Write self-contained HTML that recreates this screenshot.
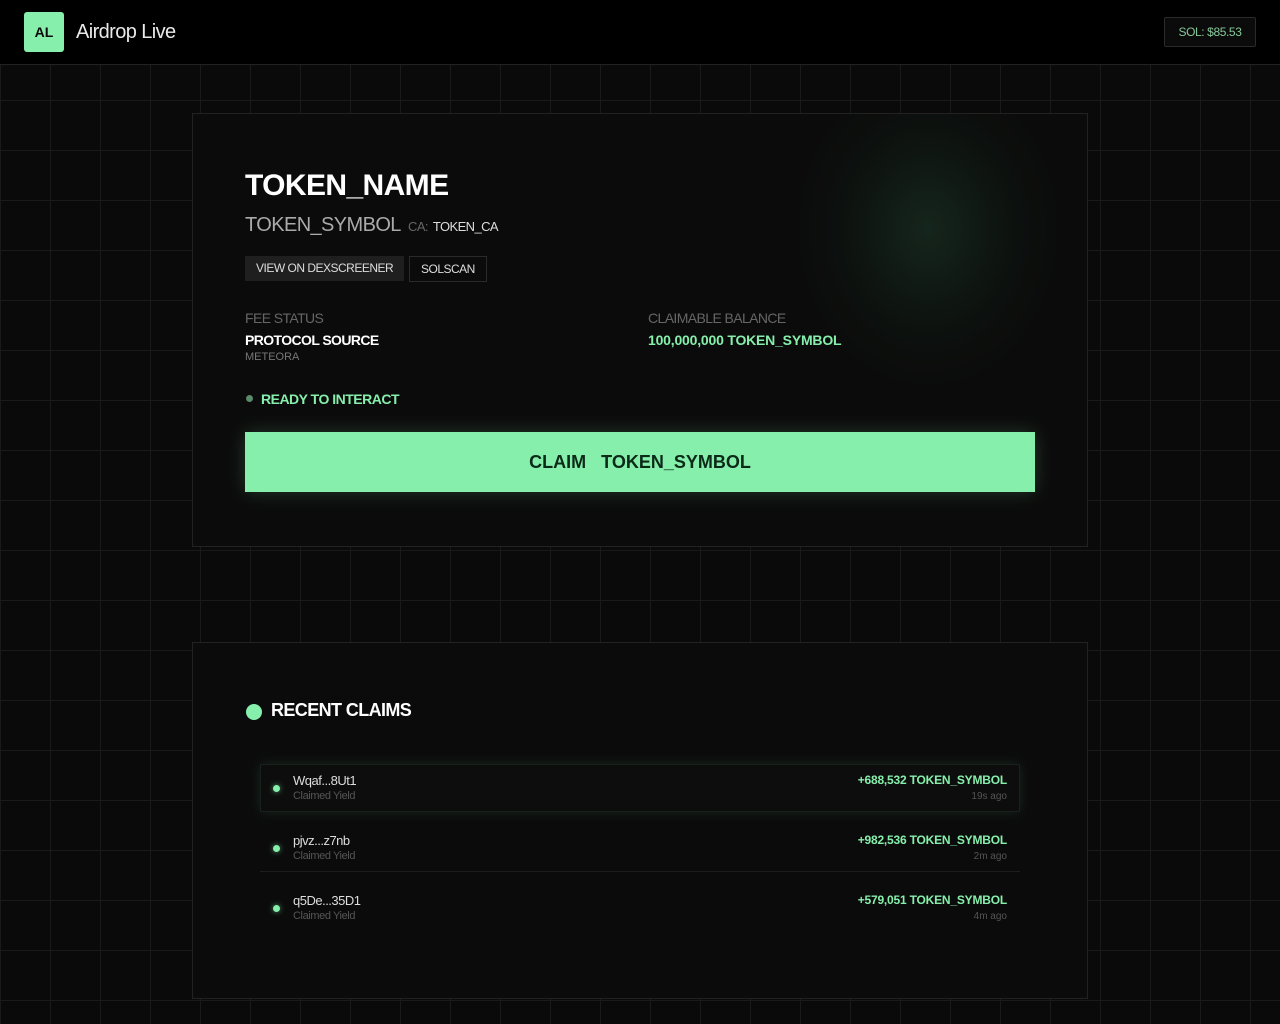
<!DOCTYPE html>
<html><head><style>
*{margin:0;padding:0;box-sizing:border-box}
body{width:1280px;height:1024px;overflow:hidden;background:#0a0a0a;font-family:"Liberation Sans",sans-serif;color:#eee;position:relative;
background-image:linear-gradient(#1a1a1a 1px,transparent 1px),linear-gradient(90deg,#1a1a1a 1px,transparent 1px);background-size:50px 50px;background-position:0 0}
.hdr{position:absolute;left:0;top:0;width:1280px;height:65px;background:#000;border-bottom:1px solid #222}
.logo{position:absolute;left:24px;top:12px;width:40px;height:40px;background:#86efac;border-radius:3px;color:#0a0a0a;font-weight:bold;font-size:14px;line-height:40px;text-align:center}
.brand{position:absolute;left:76px;top:21px;font-size:20px;letter-spacing:-0.6px;color:#eaeaea}
.sol{position:absolute;left:1164px;top:17px;width:92px;height:30px;border:1px solid #2a2a2a;background:#0b0b0b;border-radius:2px;color:#86c79a;font-size:12px;line-height:29px;text-align:center;letter-spacing:-0.4px}
.card{position:absolute;left:192px;width:896px;background:#0b0b0b;border:1px solid #222;overflow:hidden}
.glow{position:absolute;left:570px;top:0px;width:330px;height:330px;background:radial-gradient(ellipse 50% 60% at 50% 35%,rgba(40,85,60,.35),rgba(20,45,30,.15) 55%,transparent 80%)}
.t{position:absolute;white-space:nowrap}
.btn{position:absolute;height:25px;font-size:12px;line-height:25px;padding:0 11px;letter-spacing:-0.5px;color:#ddd}
.claim{position:absolute;left:52px;top:318px;width:790px;height:60px;background:#86efac;color:#0b2a17;font-size:18px;font-weight:bold;text-align:center;line-height:60px;box-shadow:0 0 18px rgba(134,239,172,.2)}
.row{position:absolute;left:67px;width:760px;height:48px}
.dot{position:absolute;left:13px;top:21px;width:7px;height:7px;border-radius:50%;background:#86efac;box-shadow:0 0 6px rgba(134,239,172,.6)}
.addr{position:absolute;left:33px;top:9px;font-size:13px;color:#ddd;letter-spacing:-0.5px}
.sub{position:absolute;left:33px;top:26px;font-size:11px;color:#555;letter-spacing:-0.4px}
.amt{position:absolute;right:13px;top:9px;font-size:12px;font-weight:bold;color:#86efac;letter-spacing:-0.2px}
.ago{position:absolute;right:13px;top:27px;font-size:10px;color:#555}
</style></head><body>
<div class="hdr"><div class="logo">AL</div><div class="brand">Airdrop Live</div><div class="sol">SOL: $85.53</div></div>

<div class="card" style="top:113px;height:434px">
<div class="glow"></div>
<div class="t" style="left:52px;top:55px;font-size:30px;font-weight:bold;color:#fff;letter-spacing:-0.6px">TOKEN_NAME</div>
<div class="t" style="left:52px;top:100px;font-size:20px;color:#aaa;letter-spacing:-0.6px">TOKEN_SYMBOL <span style="font-size:13px;color:#666;margin-left:3px">CA:</span> <span style="font-size:13px;color:#ddd">TOKEN_CA</span></div>
<div class="btn" style="left:52px;top:142px;background:#1f1f1f">VIEW ON DEXSCREENER</div>
<div class="btn" style="left:216px;top:142px;border:1px solid #2a2a2a;height:26px">SOLSCAN</div>
<div class="t" style="left:52px;top:196px;font-size:14px;color:#666;letter-spacing:-0.6px">FEE STATUS</div>
<div class="t" style="left:52px;top:218px;font-size:14px;font-weight:bold;color:#fff;letter-spacing:-0.6px">PROTOCOL SOURCE</div>
<div class="t" style="left:52px;top:237px;font-size:11px;color:#777">METEORA</div>
<div class="t" style="left:455px;top:196px;font-size:14px;color:#666;letter-spacing:-0.6px">CLAIMABLE BALANCE</div>
<div class="t" style="left:455px;top:218px;font-size:14px;font-weight:bold;color:#86efac;letter-spacing:-0.2px">100,000,000 TOKEN_SYMBOL</div>
<div style="position:absolute;left:53px;top:281px;width:7px;height:7px;border-radius:50%;background:#5a8a6a"></div>
<div class="t" style="left:68px;top:277px;font-size:14px;font-weight:bold;color:#86efac;letter-spacing:-0.5px">READY TO INTERACT</div>
<div class="claim">CLAIM &nbsp; TOKEN_SYMBOL</div>
</div>

<div class="card" style="top:642px;height:357px">
<div style="position:absolute;left:53px;top:61px;width:16px;height:16px;border-radius:50%;background:#86efac"></div>
<div class="t" style="left:78px;top:57px;font-size:18px;font-weight:bold;color:#fff;letter-spacing:-0.6px">RECENT CLAIMS</div>
<div class="row" style="top:121px;background:#0d0d0d;border:1px solid #18201b;box-shadow:0 0 12px rgba(134,239,172,.12)"><div class="dot" style="left:12px;top:20px"></div><div class="addr" style="left:32px;top:8px">Wqaf...8Ut1</div><div class="sub" style="left:32px;top:25px">Claimed Yield</div><div class="amt" style="right:12px;top:8px">+688,532 TOKEN_SYMBOL</div><div class="ago" style="right:12px;top:26px">19s ago</div></div>
<div class="row" style="top:181px;border-bottom:1px solid #1c1c1c"><div class="dot"></div><div class="addr">pjvz...z7nb</div><div class="sub">Claimed Yield</div><div class="amt">+982,536 TOKEN_SYMBOL</div><div class="ago">2m ago</div></div>
<div class="row" style="top:241px"><div class="dot"></div><div class="addr">q5De...35D1</div><div class="sub">Claimed Yield</div><div class="amt">+579,051 TOKEN_SYMBOL</div><div class="ago">4m ago</div></div>
</div>
</body></html>
